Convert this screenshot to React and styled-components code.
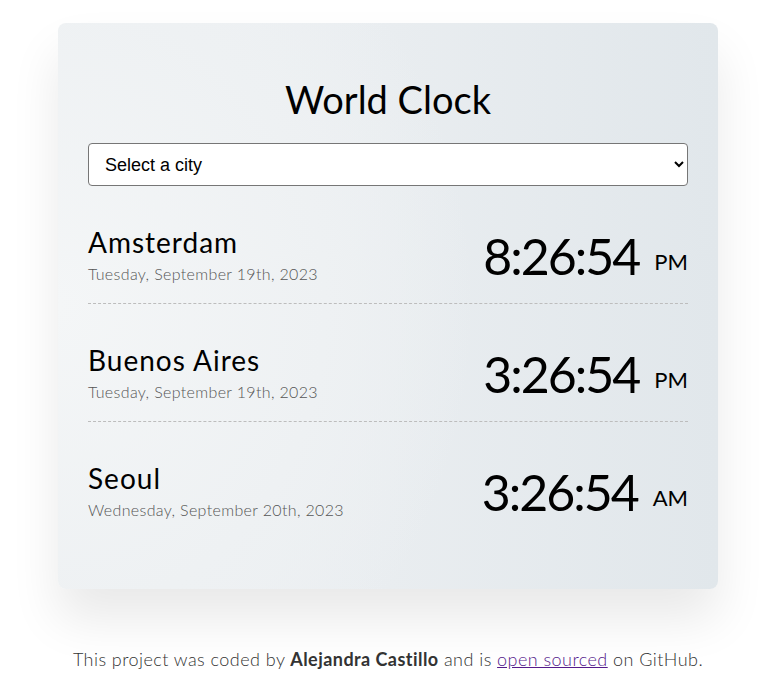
import React from "react";
import styled, {createGlobalStyle} from "styled-components";

const GlobalStyle = createGlobalStyle`
  body {
    margin: 0;
    background: #ffffff;
    font-family: Lato, "Open Sans", sans-serif;
    color: #000000;
  }
`;

const Page = styled.div`
  display: flex;
  flex-direction: column;
  align-items: center;
  padding: 23px 0 0 1px;
`;

const Card = styled.div`
  width: 660px;
  box-sizing: border-box;
  padding: 30px 30px 49px;
  border-radius: 8px;
  background: radial-gradient(ellipse 90% 120% at 0% 50%, #f4f6f7 0%, #eef1f3 45%, rgba(238, 241, 243, 0) 70%),
    linear-gradient(to right, #eff2f4 0%, #e9edf0 50%, #e1e7eb 100%);
  box-shadow: 0 30px 50px rgba(0, 0, 0, 0.09);
`;

const Title = styled.h1`
  margin: 23px 0 21px;
  text-align: center;
  font-size: 38px;
  font-weight: 400;
  line-height: 46px;
`;

const CitySelect = styled.select`
  display: block;
  width: 100%;
  height: 43px;
  padding: 0 12px;
  border: 1px solid #767676;
  border-radius: 4px;
  background: #ffffff;
  font-family: "Liberation Sans", Arial, sans-serif;
  font-size: 18px;
  color: #000000;
`;

const CityRow = styled.div`
  display: flex;
  justify-content: space-between;
  align-items: flex-start;
  height: 118px;
  box-sizing: border-box;
  border-bottom: ${({last}) => (last ? "none" : "1px dashed #bdbdbd")};
`;

const CityInfo = styled.div`
  display: flex;
  flex-direction: column;
  padding-top: 39px;
`;

const CityName = styled.div`
  font-size: 28px;
  line-height: 34px;
  letter-spacing: 1px;
`;

const CityDate = styled.div`
  margin-top: 5px;
  font-size: 16px;
  font-weight: 300;
  line-height: 20px;
  letter-spacing: 0.35px;
  color: #555555;
`;

const TimeBlock = styled.div`
  display: flex;
  align-items: baseline;
  gap: 15px;
  padding-top: 40px;
`;

const TimeValue = styled.span`
  font-size: 50px;
  line-height: 60px;
  letter-spacing: -2px;
`;

const Period = styled.span`
  font-size: 22px;
  line-height: 28px;
  position: relative;
  top: -5px;
`;

const Footer = styled.p`
  margin: 59px 0 0;
  font-size: 18px;
  font-weight: 300;
  line-height: 22px;
  letter-spacing: 0.45px;
  color: #333333;
  text-align: center;
`;

const Author = styled.strong`
  font-weight: 700;
`;

const SourceLink = styled.a`
  color: #551a8b;
`;

const cities = [
  {name: "Amsterdam", date: "Tuesday, September 19th, 2023", time: "8:26:54", period: "PM"},
  {name: "Buenos Aires", date: "Tuesday, September 19th, 2023", time: "3:26:54", period: "PM"},
  {name: "Seoul", date: "Wednesday, September 20th, 2023", time: "3:26:54", period: "AM"},
];

const App = () => (
  <Page>
    <GlobalStyle />
    <Card>
      <Title>World Clock</Title>
      <CitySelect defaultValue="">
        <option value="">Select a city</option>
        <option value="tokyo">Tokyo</option>
        <option value="paris">Paris</option>
      </CitySelect>
      {cities.map((city, i) => (
        <CityRow key={city.name} last={i === cities.length - 1}>
          <CityInfo>
            <CityName>{city.name}</CityName>
            <CityDate>{city.date}</CityDate>
          </CityInfo>
          <TimeBlock>
            <TimeValue>{city.time}</TimeValue>
            <Period>{city.period}</Period>
          </TimeBlock>
        </CityRow>
      ))}
    </Card>
    <Footer>
      This project was coded by <Author>Alejandra Castillo</Author> and is{" "}
      <SourceLink href="#">open sourced</SourceLink> on GitHub.
    </Footer>
  </Page>
);

export default App;
